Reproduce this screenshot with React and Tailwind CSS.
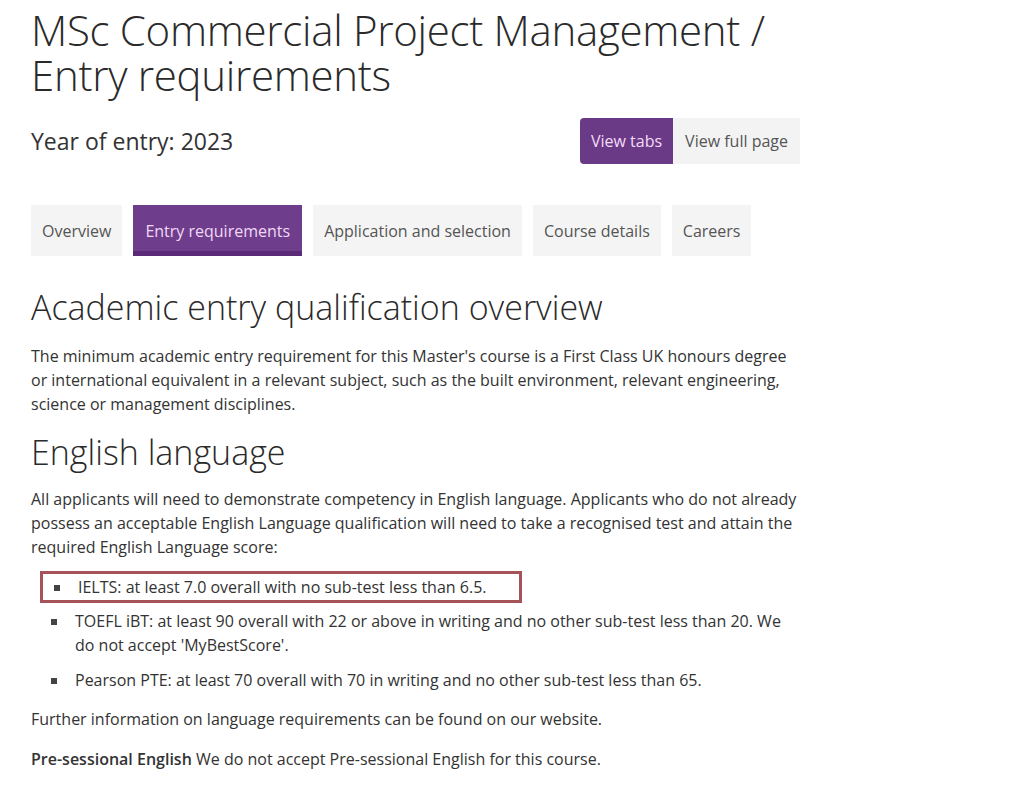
import React from 'react'

const tabs = ['Overview', 'Entry requirements', 'Application and selection', 'Course details', 'Careers']

const tests = [
  { text: 'IELTS: at least 7.0 overall with no sub-test less than 6.5.', marked: true, gap: '' },
  { text: "TOEFL iBT: at least 90 overall with 22 or above in writing and no other sub-test less than 20. We do not accept 'MyBestScore'.", gap: 'mt-[6px]' },
  { text: 'Pearson PTE: at least 70 overall with 70 in writing and no other sub-test less than 65.', gap: 'mt-[11px]' },
]

export default function App() {
  return (
    <div className="min-h-screen bg-white text-[#333] font-['Open_Sans',sans-serif]">
      <div className="w-[840px] pl-[31px] pt-[7px]">
        <h1 className="text-[42px] leading-[45px] font-light text-[#2a2a2a] tracking-[-0.3px]">
          MSc Commercial Project Management /<br />Entry requirements
        </h1>

        <div className="flex items-center justify-between mt-[21px] w-[769px]">
          <p className="text-[23px] font-normal text-[#333]">Year of entry: 2023</p>
          <div className="flex">
            <button className="h-[46px] px-[11px] bg-[#6a3a87] text-[#f4dcf7] text-[16px] rounded-l-sm">View tabs</button>
            <button className="h-[46px] px-[12px] bg-[#f3f3f3] text-[#555] text-[16px]">View full page</button>
          </div>
        </div>

        <div className="flex gap-[11px] mt-[41px]">
          {tabs.map(t => (
            <div key={t}
              className={`h-[51px] flex items-center text-[16px] ${t === 'Entry requirements' ? 'px-[12px] bg-[#6e3d8c] text-[#f1d9f5] border-b-[5px] border-[#5b2a76] pt-[5px]' : 'px-[11px] bg-[#f4f4f4] text-[#555]'}`}>
              {t}
            </div>
          ))}
        </div>

        <h2 className="text-[34px] leading-[40px] font-light text-[#2a2a2a] mt-[31px]">Academic entry qualification overview</h2>
        <p className="text-[16px] leading-[24px] mt-[17px] w-[770px]">
          The minimum academic entry requirement for this Master's course is a First Class UK honours degree or international equivalent in a relevant subject, such as the built environment, relevant engineering, science or management disciplines.
        </p>

        <h2 className="text-[34px] leading-[40px] font-light text-[#2a2a2a] mt-[16px]">English language</h2>
        <p className="text-[16px] leading-[24px] mt-[15px] w-[770px]">
          All applicants will need to demonstrate competency in English language. Applicants who do not already possess an acceptable English Language qualification will need to take a recognised test and attain the required English Language score:
        </p>

        <ul className="mt-[12px] flex flex-col">
          {tests.map(t => (
            <li key={t.text}
              className={`flex text-[16px] leading-[24px] ${t.gap} ${t.marked ? 'ml-[9px] w-[482px] border-[3px] border-[#a55258] pl-[11px] py-[1px]' : 'pl-[20px]'}`}>
              <span className="w-[6px] h-[6px] bg-[#444] mt-[10px] mr-[18px] shrink-0" />
              <span className="w-[720px] shrink-0">{t.text}</span>
            </li>
          ))}
        </ul>

        <p className="text-[16px] leading-[24px] mt-[15px]">Further information on language requirements can be found on our website.</p>
        <p className="text-[16px] leading-[24px] mt-[16px]"><span className="font-semibold">Pre-sessional English</span> We do not accept Pre-sessional English for this course.</p>
      </div>
    </div>
  )
}
